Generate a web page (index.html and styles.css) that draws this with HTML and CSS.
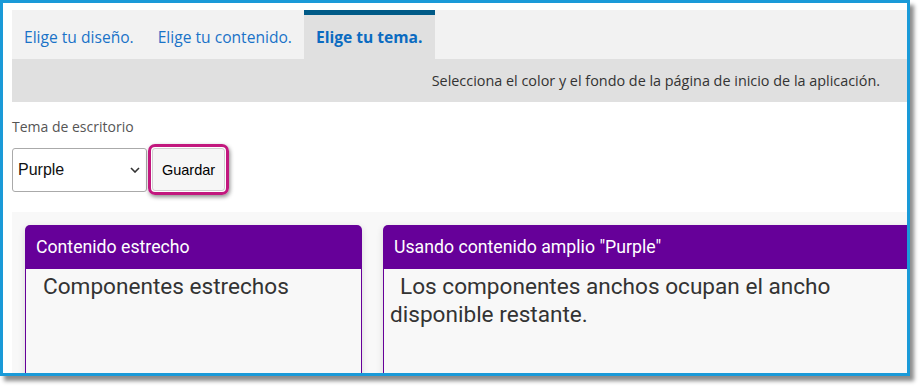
FILE: index.html
```html
<!DOCTYPE html>
<html lang="es">
<head>
<meta charset="utf-8">
<title>Elige tu tema</title>
<link rel="stylesheet" href="styles.css">
</head>
<body>
<div class="frame">
  <div class="inner">
    <nav class="tabs">
      <a class="tab">Elige tu diseño.</a>
      <a class="tab">Elige tu contenido.</a>
      <a class="tab active">Elige tu tema.</a>
    </nav>
    <div class="desc">Selecciona el color y el fondo de la página de inicio de la aplicación.</div>
    <div class="form">
      <label class="label">Tema de escritorio</label>
      <div class="controls">
        <div class="select">
          <span>Purple</span>
          <svg class="chev" width="10" height="6" viewBox="0 0 10 6"><path d="M1 1 L5 5 L9 1" fill="none" stroke="#333" stroke-width="1.6"/></svg>
        </div>
        <span class="highlight"><button class="btn">Guardar</button></span>
      </div>
    </div>
    <div class="preview">
      <div class="card narrow">
        <div class="card-head">Contenido estrecho</div>
        <div class="card-body"><p class="indent">Componentes estrechos</p></div>
      </div>
      <div class="card wide">
        <div class="card-head">Usando contenido amplio "Purple"</div>
        <div class="card-body"><p class="indent">Los componentes anchos ocupan el ancho disponible restante.</p></div>
      </div>
    </div>
  </div>
</div>
</body>
</html>
```

FILE: styles.css
```css
* { box-sizing: border-box; }
html, body { margin: 0; padding: 0; background: #fff; }
body { width: 923px; height: 390px; overflow: hidden; }

.frame {
  width: 910px;
  height: 376px;
  border: 3px solid #1a9ad8;
  background: #fff;
  box-shadow: 4px 5px 4px rgba(0,0,0,0.45);
  overflow: hidden;
}
.inner {
  padding: 7px 0 0 9px;
  height: 100%;
  overflow: hidden;
}

.tabs {
  display: flex;
  height: 49px;
  background: #f2f2f2;
  font-family: "Open Sans", sans-serif;
  font-size: 15.6px;
}
.tab {
  display: flex;
  align-items: center;
  padding: 5px 12px 0;
  color: #1a73c8;
  white-space: nowrap;
}
.tab.active {
  background: #e0e0e0;
  border-top: 5px solid #005a87;
  padding-top: 0;
  font-weight: bold;
  color: #0b6bc1;
}

.desc {
  height: 43px;
  background: #e0e0e0;
  display: flex;
  align-items: center;
  justify-content: flex-end;
  padding-right: 27px;
  font-family: "Open Sans", sans-serif;
  font-size: 14.4px;
  color: #333;
}

.form {
  padding: 16px 0 17px 0;
}
.label {
  display: block;
  font-family: "Open Sans", sans-serif;
  font-size: 14px;
  color: #555;
  line-height: 18px;
  margin-bottom: 8px;
}
.controls {
  display: flex;
  align-items: center;
  gap: 1px;
}
.select {
  width: 135px;
  height: 44px;
  border: 1px solid #aaa;
  border-radius: 3px;
  background: #fff;
  display: flex;
  align-items: center;
  justify-content: space-between;
  padding: 0 6px 0 5px;
  font-family: "Liberation Sans", Arial, sans-serif;
  font-size: 16px;
  color: #111;
}
.highlight {
  display: inline-flex;
  border: 3px solid #c2187e;
  border-radius: 7px;
  padding: 1px;
  box-shadow: 1px 2px 4px rgba(0,0,0,0.45);
}
.btn {
  width: 73px;
  height: 43px;
  background: #f6f6f6;
  border: 1px solid #cfcfcf;
  border-radius: 3px;
  font-family: "Liberation Sans", Arial, sans-serif;
  font-size: 14.5px;
  color: #000;
  padding: 0;
}

.preview {
  background: #f8f8f8;
  padding: 13px 0 0 13px;
  display: flex;
  gap: 21px;
  height: 200px;
}
.card {
  flex: none;
  box-shadow: 0 2px 7px rgba(0,0,0,0.13);
  border-radius: 5px 5px 0 0;
  display: flex;
  flex-direction: column;
}
.narrow { width: 337px; }
.wide { width: 560px; }
.card-head {
  height: 44px;
  background: #660099;
  color: #fff;
  border-radius: 5px 5px 0 0;
  display: flex;
  align-items: center;
  padding-left: 11px;
  font-family: Roboto, sans-serif;
  font-size: 17.7px;
}
.card-body {
  flex: 1;
  background: #f8f8f8;
  border-left: 1px solid #660099;
  border-right: 1px solid #660099;
  padding: 4px 6px 0;
}
.wide .card-body { padding-right: 50px; }
.card-body p {
  margin: 0;
  font-family: Roboto, sans-serif;
  font-size: 22.6px;
  line-height: 28px;
  color: #333;
}
.narrow .indent { text-indent: 11px; }
.wide .indent { text-indent: 10px; }
```
